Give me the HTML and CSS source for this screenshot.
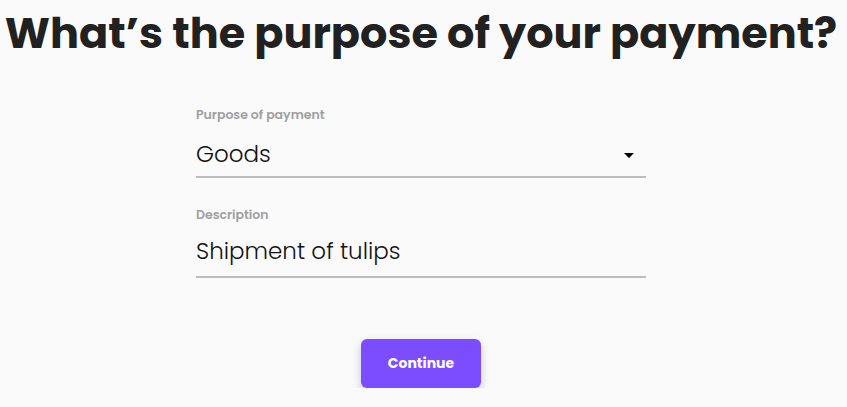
FILE: index.html
```html
<!DOCTYPE html>
<html lang="en">
<head>
  <meta charset="UTF-8">
  <title>Payment purpose</title>
  <link rel="stylesheet" href="styles.css">
</head>
<body>

<div class="page">
  <h1>What’s the purpose of your payment?</h1>

  <form class="form">
    <div class="field">
      <label>Purpose of payment</label>
      <div class="select">
        <span>Goods</span>
        <svg class="caret" width="10" height="5" viewBox="0 0 10 5"><path d="M0 0h10L5.6 4.6q-.6.6-1.2 0z" fill="#000"/></svg>
      </div>
    </div>

    <div class="field">
      <label>Description</label>
      <div class="input">Shipment of tulips</div>
    </div>

    <div class="actions">
      <button type="button">Continue</button>
    </div>
  </form>
</div>

</body>
</html>
```

FILE: styles.css
```css
body {
  font-family: 'Poppins', 'Noto Sans', sans-serif;
  background: #fafafa;
  margin: 0;
  color: #1f1f21;
}
.page {
  padding: 5px 5px 0 0;
}
h1 {
  text-align: center;
  font-size: 43px;
  font-weight: 700;
  line-height: 56px;
  margin: 0;
  white-space: nowrap;
  color: #212121;
}
.form {
  width: 450px;
  margin: 46px auto 0;
}
.field {
  margin-bottom: 29px;
}
.field label {
  display: block;
  font-size: 12.5px;
  font-weight: 600;
  color: #a0a0a0;
  line-height: 16px;
}
.select, .input {
  display: flex;
  align-items: flex-end;
  justify-content: space-between;
  height: 48px;
  padding-bottom: 5px;
  font-size: 23px;
  font-weight: 300;
  color: #111;
  border-bottom: 2px solid #bdbdbd;
}
.input {
  height: 45px;
  padding-bottom: 8px;
}
.caret {
  margin: 0 12px 13px 0;
}
.actions {
  display: flex;
  justify-content: center;
  padding-top: 32px;
}
button {
  width: 120px;
  height: 49px;
  background-color: #7c4dff;
  color: white;
  border: none;
  border-radius: 6px;
  font-family: inherit;
  font-size: 14px;
  font-weight: 700;
  box-shadow: 0px 4px 10px rgba(0,0,0,0.2);
  cursor: pointer;
}
```
